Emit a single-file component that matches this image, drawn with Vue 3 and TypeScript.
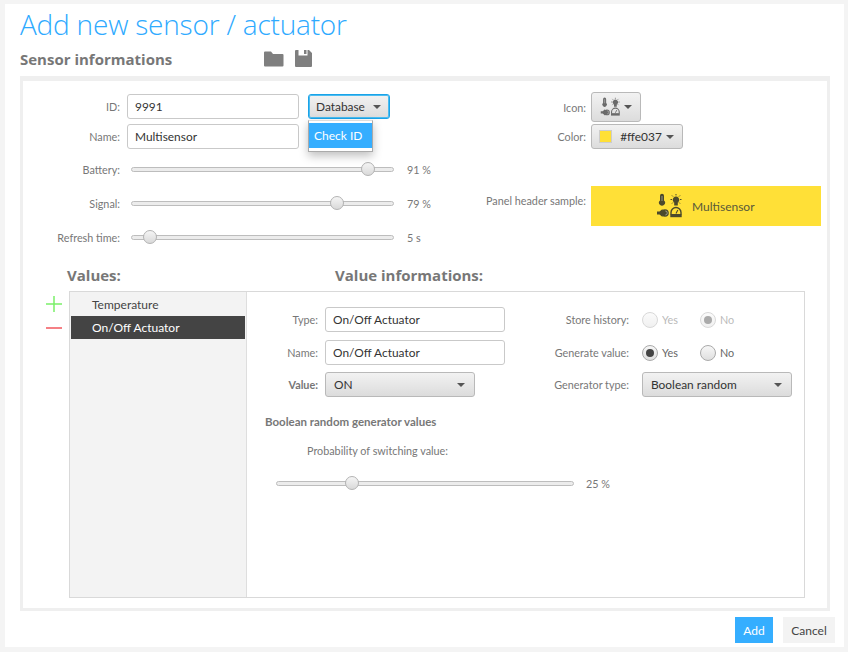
<template>
  <div class="window">
    <!-- shared multisensor glyph -->
    <svg class="defs" width="0" height="0">
      <symbol id="multi" viewBox="0 0 26 26">
        <path d="M4 2.800a2 2 0 0 1 4 0v4.600a3 3 0 1 1-4 0z" fill="currentColor" />
        <path d="M5.300 3h1.400v5h-1.400z" fill="#fff" opacity=".3" />
        <path d="M18.200 9.600a3.300 3.300 0 1 1 3.600 0v3h-3.600z" fill="currentColor" />
        <path d="M20 1v1.400M14.500 6.500h1.500M24 6.500h1.500M16 2.500l1 1M24 2.500l-1 1M16 10.500l1-1M24 10.500l-1-1" stroke="currentColor" fill="none" />
        <path d="M1 18.500h2.500l3-2.500v8l-3-2.500H1z" fill="currentColor" />
        <circle cx="9" cy="20" r="3.800" fill="currentColor" />
        <path d="M9.300 18a2 2 0 0 1 0 4" stroke="#fff" fill="none" stroke-width=".8" opacity=".5" />
        <path d="M15 21.500v-2a5 5 0 0 1 10 0v2" fill="none" stroke="currentColor" stroke-width="1.400" />
        <path d="M14.300 21h11.400v3.200H14.300z" fill="currentColor" />
        <path d="M20 20.500l1.800-3.500" stroke="currentColor" stroke-width="1.100" />
      </symbol>
    </svg>

    <h1 class="title">Add new sensor / actuator</h1>

    <div class="section-head">
      <h2>Sensor informations</h2>
      <div class="head-icons">
        <svg width="20" height="16" viewBox="0 0 20 16">
          <path d="M1 0.500h6l2 2.500h9.500a1 1 0 0 1 1 1v10.500a1 1 0 0 1-1 1H1a1 1 0 0 1-1-1v-13a1 1 0 0 1 1-1z" fill="#7f7f7f" />
        </svg>
        <svg width="17" height="17" viewBox="0 0 17 17">
          <path d="M1 0h2.500v5.500h9V0H14l3 3v13a1 1 0 0 1-1 1H1a1 1 0 0 1-1-1V1a1 1 0 0 1 1-1zM9 0h2.500v4H9z" fill="#7f7f7f" />
        </svg>
      </div>
    </div>

    <div class="panel">
      <div class="top">
        <div class="top-left">
          <div class="row">
            <label>ID:</label>
            <input class="field short" value="9991" />
            <div class="db-wrap">
              <button class="combo db">Database <span class="caret"></span></button>
              <div class="menu"><div class="menu-item">Check ID</div></div>
            </div>
          </div>
          <div class="row">
            <label>Name:</label>
            <input class="field short" value="Multisensor" />
          </div>
          <div class="sliders">
            <div v-for="s in sliders" :key="s.label" class="slider-row">
              <label>{{ s.label }}:</label>
              <div class="track">
                <span class="thumb" :style="{ left: s.pos + '%' }"></span>
              </div>
              <span class="slider-value">{{ s.text }}</span>
            </div>
          </div>
        </div>

        <div class="top-right">
          <div class="row-r icon-row">
            <label>Icon:</label>
            <button class="combo icon-btn">
              <svg class="multi-s" width="20" height="20"><use href="#multi" /></svg>
              <span class="caret"></span>
            </button>
          </div>
          <div class="row-r">
            <label>Color:</label>
            <button class="combo color-btn">
              <span class="swatch"></span><span class="color-code">#ffe037</span><span class="caret"></span>
            </button>
          </div>
          <div class="row-r sample-row">
            <label>Panel header sample:</label>
            <div class="sample">
              <svg class="multi-l" width="26" height="26"><use href="#multi" /></svg>
              <span>Multisensor</span>
            </div>
          </div>
        </div>
      </div>

      <div class="values-head">
        <h3 class="values-title">Values:</h3>
        <h3>Value informations:</h3>
      </div>

      <div class="values">
        <div class="tools">
          <svg width="16" height="16" viewBox="0 0 16 16"><path d="M8 0v16M0 8h16" stroke="#7bf06a" stroke-width="1.500" /></svg>
          <svg width="16" height="2" viewBox="0 0 16 2"><path d="M0 1h16" stroke="#f2565c" stroke-width="1.500" /></svg>
        </div>
        <div class="box">
          <ul class="list">
            <li>Temperature</li>
            <li class="selected">On/Off Actuator</li>
          </ul>
          <div class="detail">
            <div class="detail-grid">
              <div class="col-left">
                <div class="drow">
                  <label>Type:</label>
                  <input class="field wide" value="On/Off Actuator" />
                </div>
                <div class="drow">
                  <label>Name:</label>
                  <input class="field wide" value="On/Off Actuator" />
                </div>
                <div class="drow">
                  <label class="strong">Value:</label>
                  <button class="combo value-select">ON <span class="caret"></span></button>
                </div>
              </div>
              <div class="col-right">
                <div class="rrow muted">
                  <label>Store history:</label>
                  <span class="radio"></span><span class="opt">Yes</span>
                  <span class="radio on"></span><span class="opt">No</span>
                </div>
                <div class="rrow">
                  <label>Generate value:</label>
                  <span class="radio on"></span><span class="opt">Yes</span>
                  <span class="radio"></span><span class="opt">No</span>
                </div>
                <div class="rrow">
                  <label>Generator type:</label>
                  <button class="combo gen-select">Boolean random <span class="caret"></span></button>
                </div>
              </div>
            </div>
            <h4>Boolean random generator values</h4>
            <p class="prob">Probability of switching value:</p>
            <div class="prob-slider">
              <div class="track long">
                <span class="thumb" :style="{ left: '25.500%' }"></span>
              </div>
              <span class="slider-value">25 %</span>
            </div>
          </div>
        </div>
      </div>
    </div>

    <div class="actions">
      <button class="btn primary">Add</button>
      <button class="btn">Cancel</button>
    </div>
  </div>
</template>

<script setup lang="ts">
interface SliderRow {
  label: string;
  pos: number;
  text: string;
}

const sliders: SliderRow[] = [
  { label: 'Battery', pos: 90.400, text: '91 %' },
  { label: 'Signal', pos: 78.700, text: '79 %' },
  { label: 'Refresh time', pos: 6.800, text: '5 s' },
];
</script>

<style>
html, body { margin: 0; background: #f4f4f4; }
</style>

<style scoped>
.window { box-sizing: border-box; width: 839px; height: 643px; margin: 4px 0 0 5px; background: #fff; padding: 0 15px; font-family: Lato, "Open Sans", sans-serif; font-size: 10.800px; color: #777; position: relative; overflow: hidden; }
.defs { position: absolute; }
.title { margin: 0; height: 42px; font-family: "Open Sans", sans-serif; font-size: 28px; line-height: 40px; font-weight: 300; color: #2eaaff; letter-spacing: -0.2px; white-space: nowrap; }
.section-head { display: flex; align-items: center; height: 30px; }
.section-head h2 { margin: -4px 0 0; width: 244px; font-family: "Open Sans", sans-serif; font-size: 15px; font-weight: 700; color: #777; white-space: nowrap; }
.head-icons { display: flex; align-items: center; gap: 11px; margin-top: -5px; }
.panel { box-sizing: border-box; width: 810px; height: 535px; border: 3px solid #efefef; border-top-width: 5px; }
.top { display: flex; height: 173px; padding-top: 13px; box-sizing: border-box; }
.top-left { width: 427px; }
.row { display: grid; grid-template-columns: 97px 172px auto; column-gap: 7px; align-items: center; height: 25px; margin-bottom: 5px; }
label { text-align: right; white-space: nowrap; }
.field { box-sizing: border-box; height: 25px; border: 1px solid #c9c9c9; border-radius: 3px; padding: 0 7px; font: 11.900px Lato, "Open Sans", sans-serif; color: #333; outline: none; background: #fff; }
.short { width: 172px; }
.wide { width: 180px; }
.db-wrap { position: relative; margin-left: 2px; }
.combo { box-sizing: border-box; display: inline-flex; align-items: center; justify-content: space-between; height: 25px; padding: 0 8px 0 7px; border: 1px solid #b9b9b9; border-radius: 3px; background: linear-gradient(#f2f2f2, #dcdcdc); font: 11.900px Lato, "Open Sans", sans-serif; color: #333; white-space: nowrap; }
.caret { display: inline-block; width: 0; height: 0; border-left: 4px solid transparent; border-right: 4px solid transparent; border-top: 4px solid #555; }
.db { width: 82px; border: 1px solid #1aa3e8; box-shadow: 0 0 0 1px #4cbcf0 inset; }
.menu { position: absolute; top: 26px; left: 0; width: 65px; box-sizing: border-box; background: #fff; border: 1px solid #aaa; border-top: 1px solid #ddd; padding: 2px 0 3px; box-shadow: 0 4px 10px rgba(0, 0, 0, 0.25); z-index: 2; }
.menu-item { background: #35aeff; color: #fff; height: 25px; line-height: 25px; padding-left: 5px; font-size: 12px; }
.sliders { margin-top: -2px; }
.slider-row { display: grid; grid-template-columns: 97px 263px auto; column-gap: 0; align-items: center; height: 34px; }
.track { position: relative; height: 5px; box-sizing: border-box; border: 1px solid #bdbdbd; border-radius: 3px; background: #ececec; margin-left: 11px; width: 263px; }
.track.long { margin-left: 0; width: 298px; }
.thumb { position: absolute; top: 50%; width: 14px; height: 14px; margin: -7px 0 0 -7px; border-radius: 50%; border: 1px solid #b3b3b3; box-sizing: border-box; background: linear-gradient(#f5f5f5, #d9d9d9); }
.slider-value { margin-left: 24px; color: #777; white-space: nowrap; }
.top-right { flex: 1; margin-top: -2px; }
.row-r { display: grid; grid-template-columns: 136px auto; column-gap: 5px; align-items: center; justify-items: start; height: 25px; margin-bottom: 2px; }
.row-r label { justify-self: end; }
.icon-row { height: 30px; }
.icon-btn { width: 50px; height: 30px; padding: 0 8px 0 8px; color: #6a6a6a; }
.color-btn { width: 92px; padding: 0 8px 0 7px; }
.swatch { width: 13px; height: 13px; box-sizing: border-box; background: #ffe037; border: 1px solid #ccc; }
.color-code { margin-left: 4px; }
.sample-row { height: 40px; margin-top: 37px; align-items: start; }
.sample-row label { margin-top: 8px; }
.sample { box-sizing: border-box; width: 230px; height: 40px; background: #ffe037; display: flex; align-items: center; padding-left: 65px; gap: 10px; color: #5a5a3a; font-size: 12px; }
.sample svg { color: #4c4a2c; }
.values-head { display: flex; height: 33px; padding-left: 44px; align-items: center; margin-top: 4px; }
.values-head h3 { margin: 0; font-family: "Open Sans", sans-serif; font-size: 15px; font-weight: 700; color: #777; white-space: nowrap; }
.values-title { width: 268px; }
.values { display: flex; padding-left: 23px; gap: 7px; }
.tools { width: 16px; display: flex; flex-direction: column; align-items: center; padding-top: 5px; gap: 15px; }
.box { box-sizing: border-box; width: 736px; height: 307px; border: 1px solid #d9d9d9; display: flex; }
.list { margin: 0; padding: 1px; list-style: none; width: 177px; box-sizing: border-box; background: #f3f3f3; border-right: 1px solid #dedede; font-size: 12px; color: #444; }
.list li { height: 23px; line-height: 23px; padding-left: 21px; }
.list li.selected { background: #444; color: #fff; }
.detail { flex: 1; padding-top: 15px; box-sizing: border-box; }
.detail-grid { display: flex; }
.col-left { width: 268px; }
.drow { display: grid; grid-template-columns: 71px auto; column-gap: 7px; align-items: center; justify-items: start; height: 25px; margin-bottom: 8px; }
.drow label { justify-self: end; }
.drow:nth-child(2) { margin-bottom: 7px; }
.strong { font-weight: 700; }
.value-select { width: 150px; padding: 0 9px 0 8px; }
.rrow { display: flex; align-items: center; height: 25px; margin-bottom: 8px; }
.rrow:nth-child(2) { margin-bottom: 7px; }
.rrow label { width: 114px; margin-right: 13px; }
.rrow.muted .radio, .rrow.muted .opt { opacity: 0.45; }
.radio { box-sizing: border-box; width: 16px; height: 16px; border-radius: 50%; border: 1px solid #aaa; background: linear-gradient(#f7f7f7, #dfdfdf); display: inline-flex; align-items: center; justify-content: center; }
.radio.on::after { content: ""; width: 8px; height: 8px; border-radius: 50%; background: #444; }
.opt { width: 38px; padding-left: 4px; box-sizing: content-box; color: #666; }
.opt:last-child { width: auto; }
.gen-select { width: 150px; padding: 0 9px 0 8px; }
h4 { margin: 9px 0 0 18px; font-size: 11.500px; font-weight: 700; color: #777; line-height: 16px; }
.prob { margin: 13px 0 0 60px; line-height: 16px; }
.prob-slider { display: flex; align-items: center; margin: 16px 0 0 29px; height: 16px; }
.prob-slider .slider-value { margin-left: 12px; }
.actions { display: flex; justify-content: flex-end; gap: 10px; margin: 6px -6px 0 0; }
.btn { box-sizing: border-box; height: 26px; border: none; background: #f3f3f3; color: #444; font: 12px Lato, "Open Sans", sans-serif; padding: 0; width: 52px; }
.primary { background: #35aeff; color: #fff; width: 38px; }
</style>
